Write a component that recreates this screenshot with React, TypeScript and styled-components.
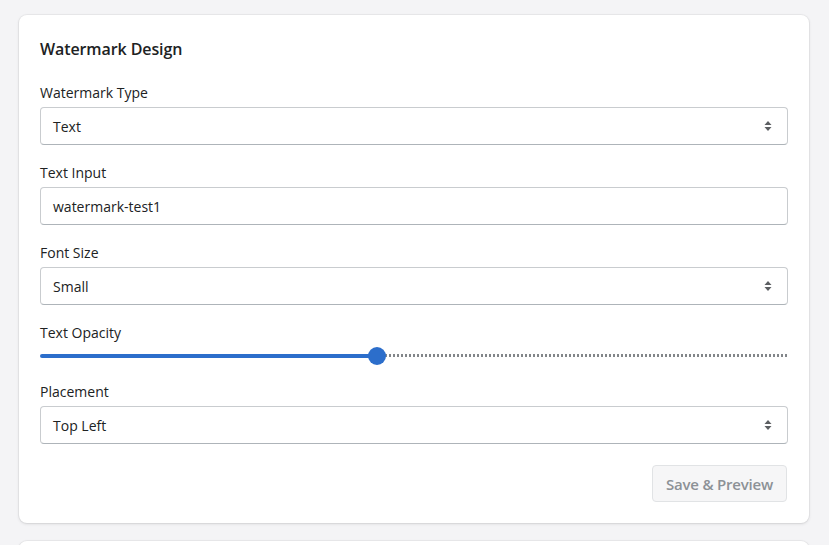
import React, { useState } from "react";
import styled, { createGlobalStyle } from "styled-components";

const Global = createGlobalStyle`
  html, body { margin: 0; padding: 0; background: #f4f4f6; }
  body { font-family: "Open Sans", "Noto Sans", sans-serif; color: #202223; }
  * { box-sizing: border-box; }
`;

const Page = styled.div`
  padding: 15px 20px 0 19px;
  display: flex;
  flex-direction: column;
  gap: 18px;
  height: 545px;
  overflow: hidden;
`;

const Card = styled.section`
  background: #ffffff;
  border-radius: 8px;
  box-shadow: 0 0 0 1px rgba(63, 63, 68, 0.05), 0 1px 3px 0 rgba(63, 63, 68, 0.15);
  padding: 20px 21px 21px 21px;
  display: flex;
  flex-direction: column;
  flex-shrink: 0;
`;

const Title = styled.h2`
  margin: 0 0 20px 0;
  font-size: 16px;
  font-weight: 600;
  line-height: 28px;
  letter-spacing: -0.1px;
`;

const Fields = styled.div`
  display: flex;
  flex-direction: column;
  gap: 18px;
`;

const Field = styled.div`
  display: flex;
  flex-direction: column;
  gap: 4px;
`;

const Label = styled.label`
  font-size: 14px;
  line-height: 20px;
`;

const Box = styled.div`
  position: relative;
  height: 38px;
  border: 1px solid #c9cccf;
  border-bottom-color: #aeb4b9;
  border-radius: 4px;
  background: #fff;
  display: flex;
  align-items: center;
  padding: 0 12px;
  font-size: 14px;
`;

const Value = styled.span`
  flex: 1;
`;

const Arrows = styled.svg`
  width: 10px;
  height: 14px;
  margin-right: 2px;
`;

const SliderWrap = styled.div`
  position: relative;
  height: 17px;
  display: flex;
  align-items: center;
`;

const TrackRest = styled.div`
  flex: 1;
  height: 3px;
  background-image: repeating-linear-gradient(90deg, #6d7175 0 2px, transparent 2px 4px);
  opacity: 0.85;
`;

const TrackFill = styled.div`
  height: 4px;
  background: #2c6ecb;
  border-radius: 2px 0 0 2px;
`;

const Thumb = styled.div`
  width: 18px;
  height: 18px;
  border-radius: 50%;
  background: #2c6ecb;
  margin-left: -9px;
  margin-right: -5px;
  position: relative;
  z-index: 1;
  flex-shrink: 0;
`;

const Footer = styled.div`
  display: flex;
  justify-content: flex-end;
  margin-top: 21px;
`;

const Button = styled.button`
  height: 37px;
  padding: 0 13px;
  margin-right: 1px;
  border: 1px solid #e1e3e5;
  border-radius: 4px;
  background: #f6f6f7;
  color: #8c9196;
  font-family: inherit;
  font-size: 15px;
  font-weight: 600;
  letter-spacing: -0.2px;
`;

const NextCard = styled.section`
  background: #fff;
  border-radius: 8px;
  height: 40px;
  box-shadow: 0 0 0 1px rgba(63, 63, 68, 0.05), 0 1px 3px 0 rgba(63, 63, 68, 0.15);
  flex-shrink: 0;
`;

const SelectArrows = () => (
  <Arrows viewBox="0 0 10 14">
    <path d="M5 2 L8.5 6 H1.5 Z" fill="#5c5f62" />
    <path d="M5 12 L8.5 8 H1.5 Z" fill="#5c5f62" />
  </Arrows>
);

const SelectField = ({ label, value }: { label: string; value: string }) => (
  <Field>
    <Label>{label}</Label>
    <Box>
      <Value>{value}</Value>
      <SelectArrows />
    </Box>
  </Field>
);

export default function App() {
  const [opacity] = useState(45);
  return (
    <>
      <Global />
      <Page>
        <Card>
          <Title>Watermark Design</Title>
          <Fields>
            <SelectField label="Watermark Type" value="Text" />
            <Field>
              <Label>Text Input</Label>
              <Box>
                <Value>watermark-test1</Value>
              </Box>
            </Field>
            <SelectField label="Font Size" value="Small" />
            <Field>
              <Label>Text Opacity</Label>
              <SliderWrap>
                <TrackFill style={{ width: `${opacity}%` }} />
                <Thumb />
                <TrackRest />
              </SliderWrap>
            </Field>
            <SelectField label="Placement" value="Top Left" />
          </Fields>
          <Footer>
            <Button disabled>Save &amp; Preview</Button>
          </Footer>
        </Card>
        <NextCard />
      </Page>
    </>
  );
}
